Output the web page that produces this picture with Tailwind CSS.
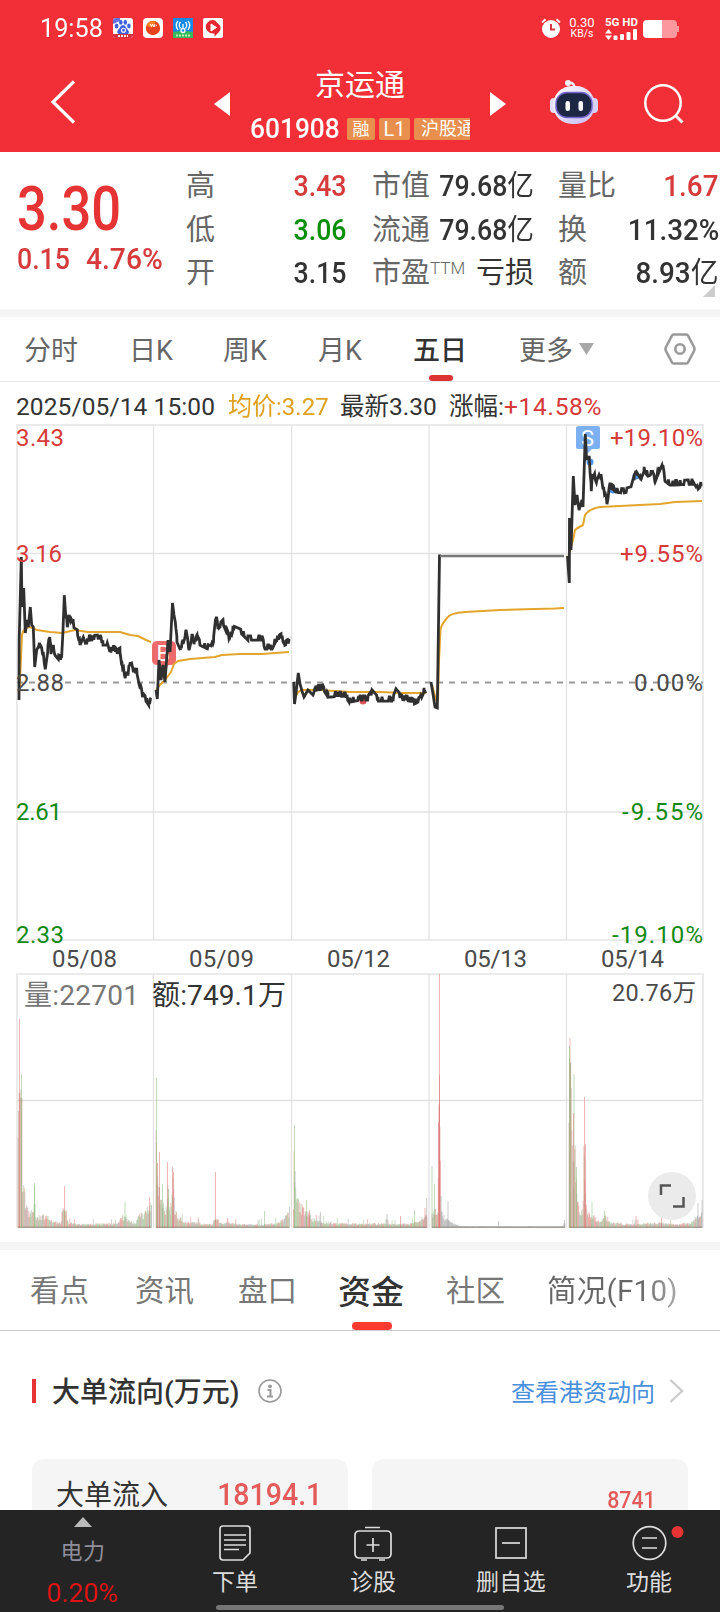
<!DOCTYPE html>
<html lang="zh-CN">
<head>
  <meta charset="UTF-8" />
  <meta name="viewport" content="width=device-width, initial-scale=1.0" />
  <title>京运通 601908</title>
  <script src="https://cdn.jsdelivr.net/npm/@tailwindcss/browser@4"></script>
</head>
<body class="w-[720px] h-[1612px] overflow-hidden flex flex-col bg-white text-[#333] leading-none whitespace-nowrap font-['Roboto','Noto_Sans_CJK_SC',sans-serif]">
  <!-- Header -->
  <header class="h-[152px] shrink-0 bg-[#f22f37] text-white">
    <div class="h-14 flex items-center pl-10 pr-[41px]">
      <span class="w-[73px] text-[26px]"><span class="inline-block origin-left scale-x-[.97]">19:58</span></span>
      <div class="flex gap-[10px]">
        <svg class="size-5" viewBox="0 0 20 20"><rect width="20" height="20" rx="3" fill="#fff"/><path d="M0 3Q0 0 3 0H7V3L0 6Z" fill="#6272dc"/><g fill="#3f62dc"><ellipse cx="3.6" cy="8" rx="1.9" ry="2.5"/><ellipse cx="7.8" cy="4.2" rx="1.8" ry="2.5"/><ellipse cx="12.3" cy="4.2" rx="1.8" ry="2.5"/><ellipse cx="15.9" cy="8" rx="1.8" ry="2.4"/><path d="M10 7C7.500 7 7 10 5.300 11.500 3 14 5 17 8 16.500H12C16 17 17 14 14.700 11.500 13 10 12.500 7 10 7Z"/></g><circle cx="10.500" cy="12.300" r="2" fill="none" stroke="#fff" stroke-width="1.100"/><path d="M0 16H20V17Q20 20 17 20H3Q0 20 0 17Z" fill="#d3333f"/><path d="M5 18H15" stroke="#fff" stroke-width="2" stroke-dasharray="2 1"/></svg>
        <svg class="size-5" viewBox="0 0 20 20"><rect width="20" height="20" rx="4" fill="#fff"/><circle cx="10" cy="10" r="7.200" fill="#e9431b"/><path d="M3.500 7Q7 1.500 13 3.500L10 9Q6 10 3.500 7Z" fill="#f58220"/><path d="M7 6l1.500 2.500L9.500 6l1.500 3 1-3M12.500 8l1.500-1" stroke="#fff" fill="none"/></svg>
        <svg class="size-5" viewBox="0 0 20 20"><rect width="20" height="20" fill="#1789e6"/><path d="M0 14Q10 12 20 14V20H0Z" fill="#38b95c"/><path d="M5 3Q1.500 7 5 12M7.500 4Q5 7 7.500 10.500M15 3Q18.500 7 15 12M12.500 4Q15 7 12.500 10.500M10 6V12" stroke="#fff" stroke-width="1.300" fill="none"/><circle cx="10" cy="12.500" r="2" fill="#1789e6" stroke="#fff" stroke-width="1.300"/><path d="M3 17.500H17" stroke="#b9f2b7" stroke-width="1.800" stroke-dasharray="2 1"/></svg>
        <svg class="size-5" viewBox="0 0 20 20"><rect width="20" height="20" rx="2" fill="#fff"/><path d="M4.500 4.500Q8 1 12 2.500L17 7.500Q18.500 11 16 14L11.500 18.500V15.500Q7 16 4.500 13Q1 8.500 4.500 4.500Z" fill="#e5262f"/><path d="M8 6V13L13.500 9.500Z" fill="#fff" stroke="#fff" stroke-linejoin="round"/></svg>
      </div>
      <svg class="ml-auto w-5 h-5" viewBox="0 0 20 20"><circle cx="10" cy="11" r="9" fill="#fff"/><path d="M1 4.500L4.500 1.300M19 4.500L15.500 1.300" stroke="#fff" stroke-width="2"/><path d="M10 6V11.500H14" fill="none" stroke="#d63b43" stroke-width="2"/></svg>
      <div class="ml-2 w-[26px] text-center">
        <div class="text-[13px] leading-[12px]">0.30</div>
        <div class="text-[10.500px] leading-[10px]">KB/s</div>
      </div>
      <div class="ml-[10px] w-[33px] flex flex-col gap-[2px]">
        <div class="text-[11.500px] leading-[10px] font-bold">5G HD</div>
        <svg class="w-[33px] h-[11px]" viewBox="0 0 33 11"><path d="M0 4.500L3.500 0L7 4.500ZM0 6.500H7L3.500 11Z" fill="#fff"/><g fill="#fff"><rect x="8.500" y="6.500" width="4" height="4.500" rx="1"/><rect x="15" y="5" width="4" height="6" rx="1"/><rect x="21.500" y="3" width="4" height="8" rx="1"/><rect x="28" width="4" height="11" rx="1"/></g></svg>
      </div>
      <svg class="ml-[5px] mt-[2px] w-9 h-[18px]" viewBox="0 0 36 18"><path d="M19 0H30Q34 0 34 4V6H36V12H34V14Q34 18 30 18H19Z" fill="#fb989d"/><path d="M19 0H4Q0 0 0 4V14Q0 18 4 18H19Z" fill="#fff"/></svg>
    </div>
    <div class="h-24 flex items-center pl-[50px]">
      <svg class="-mt-1 w-[26px] h-11" viewBox="0 0 26 44"><path d="M24 1.500L3 22L24 42.500" fill="none" stroke="#fff" stroke-width="3.200"/></svg>
      <svg class="ml-[138px] -mt-px w-4 h-6" viewBox="0 0 16 24"><path d="M16 0V24L0 12Z" fill="#fff"/></svg>
      <div class="w-[260px] flex flex-col items-center">
        <div class="text-[30px] h-[42px] leading-[42px] -mt-1 font-['Noto_Sans_CJK_SC',sans-serif]">京运通</div>
        <div class="w-[220px] h-7 mt-3 overflow-hidden flex items-center">
          <span class="w-[97px] shrink-0 text-[28px] leading-7 font-medium"><span class="inline-block origin-left scale-x-[.94]">601908</span></span>
          <span class="w-7 h-[22px] shrink-0 rounded-[2px] bg-[#e88f4d] text-[17px] leading-[22px] text-center">融</span>
          <span class="ml-1 w-[31px] h-[22px] shrink-0 rounded-[2px] bg-[#e88f4d] text-[20px] leading-[23px] text-center">L1</span>
          <span class="ml-1 w-[70px] h-[22px] shrink-0 rounded-[2px] bg-[#e88f4d] text-[18px] leading-[22px] pl-[7px]">沪股通</span>
        </div>
      </div>
      <svg class="-mt-px w-4 h-6" viewBox="0 0 16 24"><path d="M0 0V24L16 12Z" fill="#fff"/></svg>
      <svg class="ml-11 -mt-[5px] w-12 h-11" viewBox="0 0 48 44">
        <defs><linearGradient id="head" x1="0" y1="0" x2="1" y2="1"><stop offset="0" stop-color="#fff"/><stop offset="1" stop-color="#c6b9f0"/></linearGradient></defs>
        <path d="M24 8Q25 2 18 3" fill="none" stroke="#efeaf8" stroke-width="2.500"/><circle cx="18" cy="3" r="3" fill="#f3eefb"/>
        <rect y="18" width="9" height="15" rx="4" fill="#e4dff6"/><rect x="39" y="18" width="9" height="15" rx="4" fill="#d8d2f4"/>
        <rect x="3" y="6" width="42" height="38" rx="19" fill="url(#head)"/>
        <rect x="6" y="12.500" width="36" height="25" rx="11" fill="#1d2744" stroke="#7364cc" stroke-width="1.500"/>
        <rect x="15.500" y="21" width="4.500" height="10" rx="2.200" fill="#fff"/><rect x="28.500" y="21" width="4.500" height="10" rx="2.200" fill="#fff"/>
      </svg>
      <svg class="ml-[46px] -mt-px w-10 h-10" viewBox="0 0 40 40"><circle cx="19" cy="19" r="17.700" fill="none" stroke="#fff" stroke-width="2.500"/><path d="M31 31L38.500 38.500" stroke="#fff" stroke-width="3"/></svg>
    </div>
  </header>

  <!-- Quote -->
  <section class="relative h-[157px] shrink-0 flex">
    <div class="w-[186px] pl-[17px] text-[#e63434]">
      <div class="mt-[27px] h-[60px] text-[61px] leading-[60px] font-medium origin-left scale-x-[.86]">3.30</div>
      <div class="mt-[5px] text-[30px] leading-[30px] flex text-[#d63a3a] font-medium">
        <span class="w-[69px]"><span class="inline-block origin-left scale-x-[.89]">0.15</span></span>
        <span class="inline-block origin-left scale-x-[.94]">4.76%</span>
      </div>
    </div>
    <div class="w-[161px] pt-[13px] text-[29px] [&>div]:h-[43.500px] [&>div]:flex [&>div]:items-center [&>div]:justify-between [&_b]:font-medium [&_b]:origin-right [&_b]:scale-x-[.92] [&_span]:text-[#666]">
      <div><span>高</span><b class="text-[#d63a3a]">3.43</b></div>
      <div><span>低</span><b class="text-[#0a8f0a]">3.06</b></div>
      <div><span>开</span><b>3.15</b></div>
    </div>
    <div class="ml-[25px] w-[162px] pt-[13px] text-[29px] [&>div]:h-[43.500px] [&>div]:flex [&>div]:items-center [&>div]:justify-between [&_b]:font-medium [&_b]:origin-right [&_b]:-ml-4 [&_b]:scale-x-[.92] [&_i]:font-normal [&_i]:not-italic [&_span]:text-[#666]">
      <div><span>市值</span><b>79.68<i>亿</i></b></div>
      <div><span>流通</span><b>79.68<i>亿</i></b></div>
      <div><span class="flex">市盈<small class="text-[17px] font-light mt-px">TTM</small></span><i>亏损</i></div>
    </div>
    <div class="ml-6 w-[161px] pt-[13px] text-[29px] [&>div]:h-[43.500px] [&>div]:flex [&>div]:items-center [&>div]:justify-between [&_b]:font-medium [&_b]:origin-right [&_b]:scale-x-[.96] [&_i]:font-normal [&_i]:not-italic [&_span]:text-[#666]">
      <div><span>量比</span><b class="text-[#d63a3a]">1.67</b></div>
      <div><span>换</span><b>11.32%</b></div>
      <div><span>额</span><b>8.93<i>亿</i></b></div>
    </div>
    <svg class="absolute right-[5px] bottom-3 w-3 h-3" viewBox="0 0 12 12"><path d="M12 0V12H0Z" fill="#ccc"/></svg>
  </section>

  <!-- Period tabs -->
  <nav class="h-[73px] shrink-0 border-t-8 border-t-[#f4f4f4] border-b border-b-[#e6e6e6] flex items-center pl-6 text-[27px] text-[#666] [&>span]:h-full [&>span]:flex [&>span]:items-center [&>span]:pt-[5px]">
    <span class="w-[105px]">分时</span>
    <span class="w-[94px]">日K</span>
    <span class="w-[95px]">周K</span>
    <span class="w-[95px]">月K</span>
    <span class="w-[106px] relative text-[#333] font-medium">五日<i class="absolute left-4 bottom-0 w-6 h-[6px] rounded-full bg-[#dc3434]"></i></span>
    <span>更多</span>
    <svg class="ml-[6px] w-[15px] h-3" viewBox="0 0 15 12"><path d="M0 0H15L7.500 12Z" fill="#a8a8a8"/></svg>
    <svg class="ml-auto mr-6 w-8 h-8" viewBox="0 0 32 32" fill="none" stroke="#999" stroke-width="2.600"><path d="M9.500 1.500H22.500Q23.500 1.500 24 2.500L30 14Q31 16 30 18L24 29.500Q23.500 30.500 22.500 30.500H9.500Q8.500 30.500 8 29.500L2 18Q1 16 2 14L8 2.500Q8.500 1.500 9.500 1.500Z"/><circle cx="16" cy="16" r="4.700"/></svg>
  </nav>

  <div class="h-[42px] shrink-0 flex items-center pl-4 pt-2 text-[24.500px]">
    <span class="w-[212px] tracking-[.1px]">2025/05/14 15:00</span>
    <span class="w-[112px] text-[#e0a020]"><span class="inline-block origin-left scale-x-[.98]">均价:3.27</span></span>
    <span class="w-[109px]">最新3.30</span>
    <span>涨幅:<span class="text-[#d63a3a] tracking-[.7px]">+14.58%</span></span>
  </div>

  <!-- Five day chart and volume -->
  <svg class="w-[720px] h-[818px] shrink-0" viewBox="0 424 720 818" font-size="24">
    <g fill="none" stroke="#e2e2e2" stroke-width="1.300">
      <path d="M16 425H704M16 940H704M16 974H704M17 425V940M703 425V940M17 974V1228M703 974V1228" stroke="#ebebeb" stroke-width="2"/>
      <path d="M17 553.500H703M17 812H703M153.500 425V940M291.500 425V940M429 425V940M566.500 425V940"/>
      <path d="M17 1100.500H703M153.500 974V1228M291.500 974V1228M429 974V1228M566.500 974V1228"/>
    </g>
    <path d="M17 682.500H703" stroke="#999" stroke-width="1.800" stroke-dasharray="6 6"/>
    <path d="M158 641H170Q176 641 176 646V660Q176 665 171 665H168L163 680L161 665H158Q152 665 152 660V646Q152 641 158 641Z" fill="#ee6b6b"/>
    <text x="156.500" y="661" fill="#fff" font-size="22">B</text>
    <path d="M579 426H598Q600 426 600 428V447Q600 449 598 449H592L588 453L584 449H579Q576 449 576 447V428Q576 426 579 426Z" fill="#7cb0f0"/>
    <text x="581" y="446" fill="#fff" font-size="22">S</text>
    <g fill="#4d94e8"><circle cx="590" cy="462" r="3.500"/><circle cx="613" cy="490" r="3.500"/><circle cx="636" cy="476" r="3.500"/></g>
    <circle cx="363" cy="701" r="3.500" fill="#e0525a"/>
    <g id="avg" fill="none" stroke="#e4a52c" stroke-width="2" stroke-linejoin="round"></g>
    <g id="price" fill="none" stroke="#303030" stroke-width="2.800"></g>
    <path d="M440 556H564" stroke="#777" stroke-width="2.600"/>
    <g id="volume" stroke-width="1"></g>
    <g fill="#d63a3a">
      <text x="16" y="446" textLength="48">3.43</text><text x="16" y="562" textLength="46">3.16</text>
      <text x="703" y="446" text-anchor="end" textLength="93">+19.10%</text><text x="703" y="562" text-anchor="end" textLength="83">+9.55%</text>
    </g>
    <g fill="#4a4a4a">
      <text x="16" y="691" textLength="48">2.88</text><text x="703" y="691" text-anchor="end" textLength="69">0.00%</text>
    </g>
    <g fill="#128a12">
      <text x="16" y="820" textLength="46">2.61</text><text x="16" y="943" textLength="48">2.33</text>
      <text x="703" y="820" text-anchor="end" textLength="81">-9.55%</text><text x="703" y="943" text-anchor="end" textLength="91">-19.10%</text>
    </g>
    <g fill="#4a4a4a">
      <text x="52" y="967" textLength="65">05/08</text><text x="189" y="967" textLength="65">05/09</text><text x="327" y="967" textLength="63">05/12</text><text x="464" y="967" textLength="63">05/13</text><text x="601" y="967" textLength="63">05/14</text>
      <text x="612" y="1001" font-size="23.500" textLength="84">20.76万</text>
    </g>
    <text x="24" y="1005" font-size="28" fill="#777" textLength="115">量:22701</text>
    <text x="152" y="1005" font-size="28" fill="#333" textLength="134">额:749.1万</text>
    <circle cx="672" cy="1196" r="24" fill="#ebebeb"/>
    <path d="M661 1195V1185.500H671M683.500 1197V1206.500H673" fill="none" stroke="#555" stroke-width="2.500"/>
  </svg>

  <!-- Detail tabs -->
  <nav class="h-[89px] shrink-0 border-t-8 border-t-[#f4f4f4] border-b border-b-[#ccc] flex items-center pl-[30px] text-[29.500px] text-[#777] [&>span]:h-full [&>span]:flex [&>span]:items-center [&>span]:pt-1">
    <span class="w-[105px]">看点</span>
    <span class="w-[103px]">资讯</span>
    <span class="w-[100px]">盘口</span>
    <span class="w-[108px] relative text-[33px] font-medium text-[#333]">资金<i class="absolute left-[14px] bottom-0 w-10 h-2 rounded-full bg-[#fb3a30]"></i></span>
    <span class="w-[101px]">社区</span>
    <span class="tracking-[.3px] bg-linear-to-r from-[#666] from-70% to-[#aaa] bg-clip-text text-transparent">简况(F10)</span>
  </nav>

  <section class="h-[179px] shrink-0 overflow-hidden">
    <div class="h-[120px] flex items-center pl-8 pr-9">
      <i class="w-1 h-6 bg-[#e63434]"></i>
      <h2 class="ml-4 mt-1 w-[206px] text-[28px] font-medium">大单流向(万元)</h2>
      <svg class="size-6" viewBox="0 0 24 24"><circle cx="12" cy="12" r="11" fill="none" stroke="#999" stroke-width="1.600"/><circle cx="12" cy="7.300" r="1.900" fill="#999"/><path d="M9.500 11H12.500V17.500M9 17.500H15" fill="none" stroke="#999" stroke-width="2"/></svg>
      <span class="ml-auto mt-[3px] text-[24px] text-[#4a8fdc]">查看港资动向</span>
      <svg class="ml-[14px] w-[15px] h-6" viewBox="0 0 15 24"><path d="M1.500 1L13 12L1.500 23" fill="none" stroke="#ccc" stroke-width="2.400"/></svg>
    </div>
    <div class="mt-2 px-8 grid grid-cols-2 gap-6">
      <div class="h-20 rounded-xl bg-[#f5f5f5] pl-6 pr-[26px] pt-[21px] flex justify-between items-start">
        <span class="text-[28px] leading-8">大单流入</span><b class="text-[31px] leading-[30px] font-medium text-[#e35b5b] origin-right scale-x-[.92]">18194.1</b>
      </div>
      <div class="h-20 rounded-xl bg-[#f5f5f5] pr-8 pt-[25px] flex justify-end items-start">
        <b class="text-[24.500px] leading-8 font-medium text-[#e35b5b] origin-right scale-x-[.87]">8741</b>
      </div>
    </div>
  </section>

  <!-- Bottom bar -->
  <footer class="relative h-[102px] shrink-0 bg-[#242424] flex text-[#ddd] text-[23px] [&>div]:w-[138px] [&>div]:flex [&>div]:flex-col [&>div]:items-center [&_svg]:mt-[15px] [&_svg]:size-9 [&_div>span]:mt-[10px]">
    <section class="w-[166px] flex flex-col items-center">
      <i class="mt-[7px] border-x-[9px] border-b-[10px] border-x-transparent border-b-[#bbb]"></i>
      <span class="mt-[13px] text-[22px] leading-6 text-[#8f8e99] tracking-[.5px]">电力</span>
      <b class="mt-[18px] text-[25px] leading-6 font-normal text-[#e01414] scale-x-[1.07]">0.20%</b>
    </section>
    <div>
      <svg viewBox="0 0 36 36" fill="none" stroke="#ddd" stroke-width="1.700"><path d="M6 1H30Q33 1 33 4V28L26 35H6Q3 35 3 32V4Q3 1 6 1Z"/><path d="M7 10H29M7 15H29M7 20H29M7 24.500H22"/></svg>
      <span>下单</span>
    </div>
    <div>
      <svg class="overflow-visible" viewBox="0 0 36 36" fill="none" stroke="#ddd" stroke-width="1.700"><rect x="0" y="6" width="36" height="27" rx="4"/><path d="M10 2.500H25M11.500 20H24.500M18 13V27M6 35H12M24 35H30"/></svg>
      <span>诊股</span>
    </div>
    <div>
      <svg viewBox="0 0 36 36" fill="none" stroke="#ddd" stroke-width="1.700"><rect x="3" y="3" width="30" height="30"/><path d="M9 18H27"/></svg>
      <span class="tracking-[.4px]">删自选</span>
    </div>
    <div>
      <svg class="overflow-visible" viewBox="0 0 36 36" fill="none" stroke="#ddd" stroke-width="1.700"><circle cx="18.500" cy="18" r="16.300"/><path d="M11 13H26M11 23H26"/><circle cx="46.500" cy="7" r="6" fill="#e63434" stroke="none"/></svg>
      <span>功能</span>
    </div>
    <i class="absolute left-[216px] bottom-[2px] w-72 h-[5px] rounded-full bg-[#767676]"></i>
  </footer>

  <script>
    const NS = 'http://www.w3.org/2000/svg';
    let seed = 7;
    const rnd = () => (seed = (seed * 16807) % 2147483647) / 2147483647;
    const add = (id, attrs) => {
      const el = document.createElementNS(NS, 'path');
      for (const k in attrs) el.setAttribute(k, attrs[k]);
      document.getElementById(id).appendChild(el);
    };
    const at = (pts, x) => {
      for (let i = 1; i < pts.length; i++) {
        const [x0, y0] = pts[i - 1], [x1, y1] = pts[i];
        if (x <= x1) return y0 + (y1 - y0) * (x - x0) / ((x1 - x0) || 1);
      }
      return pts[pts.length - 1][1];
    };

    // price lines, one per trading day: [x, y]
    const days = [
      [[19,700],[19.2,640],[21.3,557],[22,607],[23.7,588],[25.3,633],[27,620],[28.3,627],[30.3,607],[31.7,625],[33.3,627],[34.7,667],[36.7,650],[39.3,645],[42.7,652],[45.3,667],[47.7,650],[49.7,635],[51,652],[52.7,645],[55,653],[58.3,657],[61.7,658],[63,633],[64.3,593],[66,617],[67.3,625],[69.3,617],[70.7,623],[73,617],[74,630],[77.3,632],[80,643],[83.3,635],[86,643],[89.3,638],[100,637],[103,643],[106.7,643],[109.3,652],[114,647],[116.7,652],[120,650],[121.7,663],[125,675],[127.7,675],[130.3,660],[132.7,670],[136.7,670],[139.3,683],[142.7,695],[146.7,700],[148.7,703],[151,700]],
      [[156,690],[157.3,699],[159,660],[161,680],[163,665],[165,682],[168,640],[170,652],[172.5,603],[174,615],[175.3,622],[177,640],[180.5,648],[183,642],[186,632],[189,648],[192,636],[194,642],[197,637],[200,643],[206,646],[211,648],[213.5,640],[216,617],[218,627],[223,622],[226,629],[230,639],[233,628],[242,632],[248,638],[262,638],[265,647],[272,647],[276,639],[281,636],[285,643],[289,641]],
      [[293.7,682],[294.5,704],[296,693],[298.3,673],[300,684],[302,691],[304,697],[308,690],[313,695],[316,688],[323,687],[328,695],[345,694],[349,700],[360,698],[368,698],[372,692],[378,699],[393,699],[396,691],[401,697],[410,699],[414,702],[420,699],[424,690],[426.5,689]],
      [[431,682],[433,694],[435,707],[437.3,708],[439.5,556],[441,556]],
      [[567.5,556],[569.3,583],[569.5,518],[571,550],[573.3,476],[575,505],[577,495],[579,510],[582,500],[583,507],[585.3,434],[586.5,458],[589,455],[591.3,489],[593,472],[597,482],[601,472],[603,487],[607,502],[610,485],[616,490],[623,491],[631,489],[634,478],[636,473],[640,480],[644,469],[648,474],[652,472],[655,480],[659,470],[662,463],[665,479],[670,483],[692,482],[696,489],[701,484]]
    ];
    days.forEach((pts, d) => {
      let path = '';
      const end = pts[pts.length - 1][0];
      const xs = pts.map(p => p[0]);
      for (let x = xs[0] + 10; x < end; x += .9) xs.push(x);
      const first = xs[0];
      xs.sort((a, b) => a - b).forEach((x, i) => {
        // after the open, flip around the trend by less than one price tick
        let y = at(pts, x);
        if (d !== 3 && x > first + 20) y += rnd() < .5 ? -2.2 : 2.2;
        path += (i ? 'L' : 'M') + x.toFixed(1) + ' ' + y.toFixed(1);
      });
      add('price', { d: path });
    });

    // average price
    [
      'M19 695L20 680L22 635Q23 628 30 627L37 630L50 632L62 633L75 630L88 632H120L130 635L138 636L146 640L151 642',
      'M156 690L160 685L165 680L171 672L174 664L178 661L190 659L215 657L222 655L240 654H262L275 653L289 652',
      'M294 700L298 692L302 690L320 690L350 692L380 692L402 693H426',
      'M432 685L436 700L438 700L439 660L440.5 630Q441 625 447 618Q450 613 465 612L500 610L535 609L555 608.500L564 608',
      'M568.500 556L573 540L575 530Q577 528 583 525L585 515Q589 509 600 507L620 506L640 505L660 504L675 502L702 501'
    ].forEach(d => add('avg', { d }));

    // volume envelope [x, height] and single tall bars [x, height, colour]
    const base = 1228, R = '#d9706c', G = '#86b878', K = '#999', B = '#b98d74';
    const env = [
      [[18,90],[19,139],[22,140],[22.5,61],[24,42],[26,32],[28,20],[33,15],[34.5,40],[36,12],[46,14],[52,6],[61,5],[63,26],[65,26],[68,5],[80,3],[118,4],[122,14],[127,8],[136,4],[139,18],[143,12],[151,26]],
      [[156,100],[158,55],[160,45],[163,28],[165,12],[168,45],[170,16],[173,50],[175,18],[178,12],[184,6],[212,3],[216,12],[219,6],[240,3],[262,3],[275,4],[283,8],[289,18]],
      [[293.5,20],[294,85],[296,36],[300,24],[306,20],[312,10],[325,6],[340,4],[375,4],[395,3],[410,4],[420,7],[427,18]],
      [[432,15],[435,26],[438,20],[439,145],[440,110],[441,25],[445,10],[452,5],[460,1],[563,1],[565,6]],
      [[569,110],[569.5,180],[571,170],[572,90],[574,60],[575,90],[577,40],[580,16],[583,20],[584,90],[586,30],[588,16],[594,12],[600,5],[605,12],[611,5],[630,3],[660,5],[675,3],[690,4],[696,12],[702,20]]
    ];
    env.forEach((pts, d) => {
      const end = pts[pts.length - 1][0];
      for (let x = pts[0][0]; x <= end; x += .57) {
        const e = at(pts, x), c = rnd();
        const flat = d === 3 && x > 441;
        let h = e * (e > 80 ? .9 + rnd() * .1 : .5 + rnd() * .55) + 1;
        if (e < 10 && !flat && rnd() > .95) h += 5;
        const tint = flat ? K : d === 3 && x > 438 ? R : e > 80 ? B : c < .38 ? R : c < .78 ? G : K;
        add('volume', { d: `M${x.toFixed(2)} ${base}v${-h.toFixed(1)}`, stroke: tint, 'stroke-opacity': '.42' });
      }
      add('volume', { d: `M${pts[0][0]} ${base - .8}H${end}`, stroke: '#8c8478', 'stroke-width': 1.4, 'stroke-opacity': '.6' });
    });
    [
      [19.5,209,R],[21.5,154,G],[34.5,45,G],[64.5,42,R],[125,26,G],[149.5,31,R],[151.5,23,K],
      [156.5,150,G],[157.5,65,R],[159.5,76,R],[162.5,44,G],[167.5,66,R],[168.5,39,G],[172.5,61,R],[173.5,56,R],[215.5,56,R],[264.5,17,G],[289.5,21,K],
      [294.5,103,G],[306.5,28,G],[309.5,18,R],[320.5,16,K],[387,14,K],[400.5,12,R],[414.5,18,G],[425,20,R],[426.7,30,K],
      [432,62,G],[434.5,44,G],[439.5,254,R],[439.5,153,R],[438.5,106,R],[441,32,K],[448,27,K],[498.5,7,K],[564.5,8,K],
      [570,190,R],[569.5,182,G],[570.5,165,G],[574,154,G],[573.5,115,R],[576.5,61,G],[584.5,131,R],[585.5,84,R],[592,26,G],[604.5,17,G],[636,12,R],[661.5,14,R],[698,25,K],[702,28,K]
    ].forEach(([x, h, c]) => add('volume', { d: `M${x} ${base}v${-h}`, stroke: c, 'stroke-opacity': '.5' }));
  </script>
</body>
</html>
